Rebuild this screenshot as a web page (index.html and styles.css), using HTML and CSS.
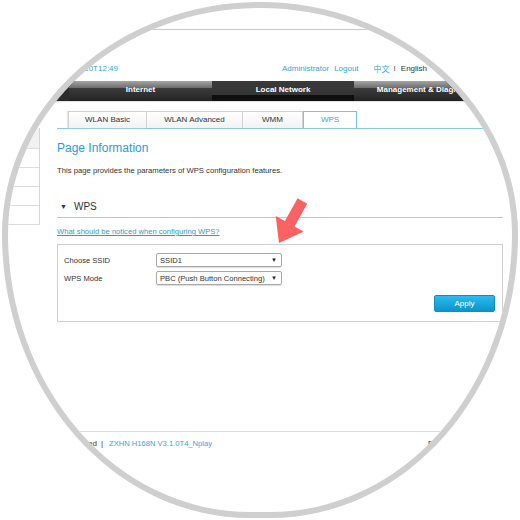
FILE: index.html
```html
<!DOCTYPE html>
<html lang="en">
<head>
  <meta charset="UTF-8" />
  <title>WPS</title>
  <link rel="stylesheet" href="styles.css">
</head>
<body>
  <div class="lens">
    <div class="screen">
      <div class="topbar"></div>

      <div class="header">
        <span class="time">2017-05-10T12:49</span>
        <a class="admin">Administrator</a>
        <a class="logout">Logout</a>
        <a class="lang-cn">中文</a>
        <span class="sep">I</span>
        <span class="lang-en">English</span>
      </div>

      <div class="nav">
        <div class="nav-item">Internet</div>
        <div class="nav-item active">Local Network</div>
        <div class="nav-item">Management &amp; Diagnosis</div>
      </div>

      <div class="body">
        <div class="sidebar">
          <div class="side-head"></div>
          <div class="side-row"></div>
          <div class="side-row"></div>
          <div class="side-row"></div>
          <div class="side-row"></div>
        </div>

        <div class="main">
          <div class="subtabs">
            <div class="tab t-basic">WLAN Basic</div>
            <div class="tab t-adv">WLAN Advanced</div>
            <div class="tab t-wmm">WMM</div>
            <div class="tab t-wps active">WPS</div>
          </div>

          <h2 class="page-title">Page Information</h2>
          <p class="page-desc">This page provides the parameters of WPS configuration features.</p>

          <div class="section-head"><span class="caret">&#9660;</span>WPS</div>
          <a class="notice">What should be noticed when configuring WPS?</a>

          <div class="form-box">
            <div class="form-row">
              <span class="label">Choose SSID</span>
              <div class="select"><span>SSID1</span><span class="arrow">&#9660;</span></div>
            </div>
            <div class="form-row">
              <span class="label">WPS Mode</span>
              <div class="select"><span>PBC (Push Button Connecting)</span><span class="arrow">&#9660;</span></div>
            </div>
            <div class="actions">
              <button class="apply">Apply</button>
            </div>
          </div>
        </div>
      </div>

      <div class="footer">
        <div class="foot-left">
          <span>All rights reserved</span>
          <span class="pipe">|</span>
          <span class="version">ZXHN H168N V3.1.0T4_Nplay</span>
        </div>
        <span class="foot-right">Best viewed with IE9+</span>
      </div>

      <!-- red pointer over the SSID select -->
      <svg class="pointer" width="45" height="55" viewBox="0 0 45 55">
        <polygon points="27.6,3.3 37.2,8.7 24.5,31.5 33.7,36.6 9,48 5.7,21 14.9,26.1" fill="#fc6262"/>
      </svg>
    </div>
  </div>
</body>
</html>
```

FILE: styles.css
```css
body {
  margin: 0;
  background: #fff;
  font-family: "Liberation Sans", Arial, sans-serif;
  color: #333;
}
.lens {
  width: 516px;
  height: 516px;
  margin: 2px;
  box-sizing: border-box;
  border: 6px solid #cfcfcf;
  border-radius: 50% 50% 48% 48% / 45% 45% 55% 55%;
  overflow: hidden;
  position: relative;
}
.screen {
  position: relative;
  width: 520px;
  margin: -8px 0 0 -8px;
}
.topbar {
  height: 29px;
  border-bottom: 1px solid #c8c8c8;
}

/* header */
.header {
  height: 51px;
  box-sizing: border-box;
  padding-top: 33px;
  display: flex;
  font-size: 8px;
  line-height: 12px;
  color: #3b9fd8;
}
.time {
  width: 118px;
  text-align: right;
}
.admin { margin-left: 164px; }
.logout { margin-left: 5px; }
.lang-cn {
  margin-left: 15px;
  font-family: "Noto Sans CJK SC", sans-serif;
}
.sep {
  margin-left: 4px;
  color: #555;
}
.lang-en {
  margin-left: 5px;
  color: #333;
}

/* main nav */
.nav {
  display: flex;
  height: 20px;
  padding-left: 69px;
  background: #2c2c2c;
  border-bottom: 1px solid #e2e2e2;
}
.nav-item {
  width: 143px;
  flex: none;
  text-align: center;
  color: #fff;
  font-size: 8px;
  font-weight: bold;
  line-height: 18px;
  background: linear-gradient(#a5a5a5 0, #6d6d6d 34%, #3a3a3a 35%, #2e2e2e 75%, #222 100%);
}
.nav-item.active {
  width: 142px;
  background: linear-gradient(#3a3a3a 0, #353535 70%, #0e0e0e 71%, #111 100%);
}

/* layout */
.body {
  display: flex;
  align-items: flex-start;
}
.sidebar {
  width: 40px;
  margin-top: 26px;
  border-right: 1px solid #d6d6d6;
  box-sizing: border-box;
  flex: none;
}
.side-head {
  height: 21px;
  background: #f1f1f1;
  border-bottom: 1px solid #dcdcdc;
  box-sizing: border-box;
}
.side-row {
  height: 19px;
  border-bottom: 1px solid #dcdcdc;
  box-sizing: border-box;
}
.main {
  width: 446px;
  margin-left: 17px;
}

/* sub tabs */
.subtabs {
  display: flex;
  padding: 9px 0 0 11px;
  border-bottom: 1px solid #86c8e6;
}
.tab {
  height: 17px;
  box-sizing: border-box;
  border: 1px solid #d2d2d2;
  border-bottom: none;
  border-left: none;
  background: linear-gradient(#fff, #f2f2f2);
  font-size: 8px;
  line-height: 16px;
  text-align: center;
  color: #333;
}
.t-basic { width: 79px; border-left: 1px solid #d2d2d2; box-shadow: -1px 0 1px #e6e6e6; }
.t-adv { width: 96px; }
.t-wmm { width: 60px; }
.t-wps { width: 54px; }
.tab.active {
  background: #fff;
  border: 1px solid #7cc3e3;
  border-bottom: none;
  color: #3b9fd8;
}

.page-title {
  margin: 11px 0 0;
  font-size: 12px;
  font-weight: normal;
  line-height: 16px;
  color: #2d9bd3;
}
.page-desc {
  margin: 9px 0 0;
  font-size: 7.7px;
  line-height: 12px;
}
.section-head {
  margin-top: 23px;
  padding: 0 0 3px 3px;
  border-bottom: 1px solid #c4c4c4;
  font-size: 10px;
  line-height: 14px;
  color: #333;
}
.caret {
  font-size: 7px;
  margin-right: 7px;
  vertical-align: 1px;
}
.notice {
  display: block;
  margin-top: 8px;
  font-size: 7.6px;
  line-height: 12px;
  color: #3399cc;
  text-decoration: underline;
}

/* form */
.form-box {
  margin-top: 6px;
  height: 78px;
  box-sizing: border-box;
  border: 1px solid #d0d0d0;
  padding: 8px 6px 5px 6px;
}
.form-row {
  display: flex;
  align-items: center;
  height: 14px;
  margin-bottom: 4px;
  font-size: 7.6px;
}
.label {
  width: 92px;
}
.select {
  width: 126px;
  height: 14px;
  box-sizing: border-box;
  border: 1px solid #a9a9a9;
  border-radius: 2px;
  box-shadow: 0 1px 1px #ddd;
  display: flex;
  justify-content: space-between;
  align-items: center;
  padding: 0 4px 0 3px;
  font-size: 7.6px;
}
.arrow {
  font-size: 6px;
  color: #222;
}
.actions {
  display: flex;
  justify-content: flex-end;
  margin-top: 10px;
}
.apply {
  width: 61px;
  height: 17px;
  padding: 0;
  margin-right: 1px;
  border: 1px solid #0b8fc2;
  border-radius: 2px;
  background: linear-gradient(#2cbcef, #0a94ca);
  color: #fff;
  font-family: "Liberation Sans", Arial, sans-serif;
  font-size: 8px;
}

/* footer */
.footer {
  display: flex;
  margin-top: 109px;
  border-top: 1px solid #dcdcdc;
  padding-top: 6px;
  font-size: 8px;
  line-height: 12px;
}
.foot-left {
  width: 212px;
  flex: none;
  display: flex;
  justify-content: flex-end;
  white-space: nowrap;
}
.pipe { margin: 0 6px 0 4px; }
.version {
  color: #3b9fd8;
  font-size: 7.6px;
}
.foot-right {
  margin-left: 216px;
  white-space: nowrap;
}

.pointer {
  position: absolute;
  left: 270px;
  top: 195px;
}
```
